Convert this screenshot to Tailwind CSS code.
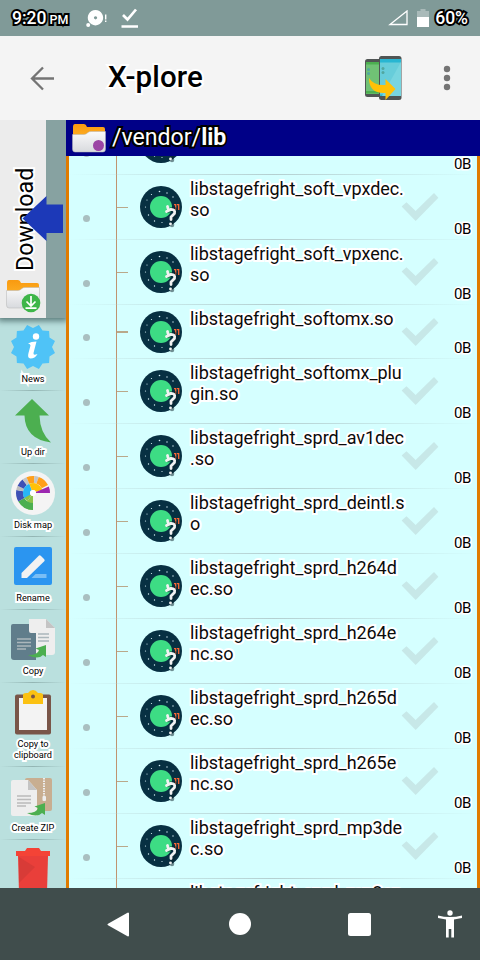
<!DOCTYPE html>
<html lang="en">
<head>
<meta charset="utf-8">
<title>X-plore</title>
<script src="https://cdn.jsdelivr.net/npm/@tailwindcss/browser@4"></script>
</head>
<body class="w-[480px] h-[960px] overflow-hidden flex flex-col bg-[#404d4c] font-[Roboto,sans-serif] text-black">

<svg class="absolute w-0 h-0">
  <defs>
    <linearGradient id="fo" x1="0" y1="0" x2="0" y2="1"><stop offset="0" stop-color="#f99a10"/><stop offset="1" stop-color="#ffb92e"/></linearGradient>
    <linearGradient id="fw" x1="0" y1="0" x2="0" y2="1"><stop offset="0" stop-color="#fafafa"/><stop offset="1" stop-color="#d8dade"/></linearGradient>
  </defs>
  <symbol id="folder" viewBox="0 0 34 30">
    <path d="M1 4Q1 1 3 1H12Q14 1 15 4H31Q33 4 33 6V22H1Z" fill="url(#fo)"/>
    <path d="M.5 11.500H12Q14 11.500 16 9.500Q17 8.500 19 8.500H33.500V26Q33.500 29 31 29H3Q.5 29 .5 26Z" fill="url(#fw)" stroke="#b5b5b5" stroke-width=".5"/>
  </symbol>
  <symbol id="android" viewBox="0 0 42 42">
    <circle cx="21" cy="21" r="21" fill="#073042"/>
    <g fill="#d7eff5"><circle cx="19.500" cy="5.500" r=".8"/><circle cx="27" cy="7" r=".7"/><circle cx="33" cy="11" r=".7"/><circle cx="11.500" cy="8.500" r=".6"/><circle cx="7" cy="14" r=".6"/><circle cx="5.500" cy="21" r=".6"/><circle cx="8.500" cy="29" r=".7"/><circle cx="14.500" cy="35" r=".7"/><circle cx="22" cy="36.500" r=".6"/></g>
    <circle cx="21" cy="21" r="11" fill="#3ddc84"/>
    <path d="M34 18.700H35.700V24M37 18.700H38.700V24" fill="none" stroke="#f86734" stroke-width="1.300"/>
    <g fill="none" stroke-linecap="round" stroke-linejoin="round"><path d="M27.500 24L30 22.500Q35 21 35.500 25Q35.500 28 32.500 30L31.500 33.500M31 37.500V38" stroke="#0a2028" stroke-opacity=".5" stroke-width="4.500" transform="translate(1 1)"/><path d="M27.500 20.500L28.500 24.500M26.500 25.500L31 23.300Q35.500 23.500 34.500 27.500L31 31V33.500M30.500 37.800V38" stroke="#f2f2f2" stroke-width="2.800"/></g>
  </symbol>
  <symbol id="check" viewBox="0 0 38 30"><path d="M0 14L5 9.500L14.500 18.500L33.500 0L38 5L14.500 29Z" fill="#c7e8e8"/></symbol>
</svg>

<header class="h-9 shrink-0 flex items-center bg-[#809a98] pl-3 text-white text-[17.5px] leading-none">
  <div class="w-[74px] pt-px font-medium [-webkit-text-stroke:4px_black] [paint-order:stroke_fill] whitespace-nowrap">9:20<span class="text-[12.5px]"> PM</span></div>
  <svg class="w-[22px] h-5" viewBox="0 0 22 20" fill="#fff"><path fill-rule="evenodd" d="M9.500 2A7.700 7.700 0 1 1 9.400 2ZM9.500 8.200A1.600 1.600 0 1 0 9.600 8.200Z"/><circle cx="2.200" cy="17" r="2"/><rect x="19" y="6.500" width="1.400" height="5"/><rect x="19" y="12.500" width="1.400" height="1.500"/></svg>
  <svg class="ml-3 w-5 h-5" viewBox="0 0 20 20" fill="none" stroke="#fff"><path d="M3 7L7.500 11.500L16 1.500M1.500 18.500H18" stroke-width="2.700"/></svg>
  <svg class="ml-auto w-5 h-4" viewBox="0 0 20 16"><path d="M2 14.500L19 1V14.500Z" fill="none" stroke="#fff" stroke-width="1.300"/></svg>
  <svg class="ml-[9px] w-3 h-[18px]" viewBox="0 0 12 18"><path d="M0 2H3.500V0H8.500V2H12V18H0Z" fill="#a9bab9"/><path d="M0 8H12V18H0Z" fill="#fff"/></svg>
  <div class="ml-[6px] mr-[12px] pt-px font-medium [-webkit-text-stroke:4px_black] [paint-order:stroke_fill]">60%</div>
</header>

<div class="h-[84px] shrink-0 flex items-center bg-[#f4f4f4] pl-[30px]">
  <svg class="w-[25px] h-[25px]" viewBox="0 0 25 25" fill="none" stroke="#747474" stroke-width="2.300"><path d="M24 12.500H2M13 1.500L2 12.500L13 23.500"/></svg>
  <h1 class="ml-[53px] text-[29.500px] leading-none tracking-[0.1px] font-medium [-webkit-text-stroke:4px_white] [paint-order:stroke_fill]">X-plore</h1>
  <svg class="ml-auto w-[38px] h-[46px]" viewBox="0 0 38 46">
    <rect x="1" y="4" width="20" height="38" rx="2.500" fill="#505554"/><path d="M2 7H16V39H2Z" fill="#70c275"/><path d="M2 7H16V9.500H2ZM2 36H16V38.500H2Z" fill="#4caf50"/>
    <rect x="15" y="1" width="22.500" height="44" rx="2.500" fill="#505554"/><path d="M16 4H37V41H16Z" fill="#67cdda"/><path d="M16 4H37V7.500H16ZM16 39.500H37V41H16Z" fill="#28b6d2"/>
    <path d="M37 7L18 41H37Z" fill="#78d5df"/><g fill="#51a7a0"><circle cx="4.500" cy="14.500" r="1.500"/><circle cx="4.500" cy="18.500" r="1.500"/><circle cx="19" cy="13.500" r="1.500"/><circle cx="19" cy="17.500" r="1.500"/></g>
    <path d="M5 23Q10 31 21.500 30V24L31.500 34L21.500 45V38Q5 39 5 23Z" fill="#ffc107"/>
  </svg>
  <svg class="ml-[41px] mr-[29px] w-[8px] h-[26px]" viewBox="0 0 8 26" fill="#747474"><circle cx="4" cy="4" r="3.200"/><circle cx="4" cy="13" r="3.200"/><circle cx="4" cy="22" r="3.200"/></svg>
</div>

<main class="h-[768px] shrink-0 flex overflow-hidden">
  <aside class="w-[66px] shrink-0 bg-[#bae0de] flex flex-col overflow-hidden relative">
    <div class="h-[198px] shrink-0 flex bg-[#87a2a1] z-10 shadow-[0_1px_6px_2px_rgba(50,80,80,0.7)]">
      <div class="w-[46px] bg-[#ececec] flex flex-col items-center justify-end pb-[5px]">
        <div class="h-[104px] mb-[8px] ml-[4px] text-[23.2px] leading-[28px] [writing-mode:vertical-rl] rotate-180 whitespace-nowrap [-webkit-text-stroke:4px_white] [paint-order:stroke_fill]">Download</div>
        <svg class="w-[36px] h-[34px]" viewBox="0 0 36 34"><use href="#folder" width="34" height="30" x="1" y="0"/><circle cx="26" cy="24" r="9.300" fill="#3eb649"/><path d="M26 17V26M21.500 22.500L26 27L30.500 22.500M20.500 29.200H31.500" fill="none" stroke="#fff" stroke-width="1.700"/></svg>
      </div>
    </div>
    <svg class="absolute z-20 left-[22px] top-[76px] w-[41px] h-[45px]" viewBox="0 0 41 45"><path d="M.5 22.500L24.500 0V8.500H41V37H24.500V45Z" fill="#1c39b8"/></svg>
    <div id="tools" class="flex flex-col"></div>
  </aside>

  <section class="flex-1 flex flex-col min-w-0">
    <div class="h-9 shrink-0 bg-[#000087] flex items-center pl-[6px] text-white text-[23.1px] leading-none">
      <svg class="w-[34px] h-[30px]" viewBox="0 0 34 30"><use href="#folder" width="34" height="30"/><circle cx="26.500" cy="22.500" r="5.500" fill="#9c45a5"/></svg>
      <div class="ml-[6px] whitespace-nowrap [-webkit-text-stroke:4px_black] [paint-order:stroke_fill]">/vendor/<b>lib</b></div>
    </div>
    <div class="flex-1 min-h-0 border-l-[3px] border-r-[3px] border-[#e07b00] bg-[#d5ffff] overflow-hidden flex flex-col">
      <div id="files" class="-mt-[46px] flex flex-col"></div>
    </div>
  </section>
</main>

<nav class="h-[72px] shrink-0 relative flex items-center bg-[#404d4c] pl-[107px]">
  <svg class="w-[22px] h-[25px]" viewBox="0 0 22 25"><path d="M1.500 12.500L21 1.500V23.500Z" fill="#fff" stroke="#fff" stroke-width="2" stroke-linejoin="round"/></svg>
  <div class="ml-[100px] w-[22px] h-[22px] rounded-full bg-white"></div>
  <div class="ml-[97px] w-[23px] h-[23px] rounded-[2.500px] bg-white"></div>
  <svg class="ml-[67px] w-6 h-[28px]" viewBox="0 0 24 28" fill="#fff"><circle cx="12" cy="3" r="2.700"/><path d="M0 5.500Q12 8.500 24 5.500V8L16 9.500V27.500H13.300V19H10.700V27.500H8V9.500L0 8Z"/></svg>
</nav>

<script>
const files = [
  ["", ""], ["libstagefright_soft_vpxdec.", "so"], ["libstagefright_soft_vpxenc.", "so"],
  ["libstagefright_softomx.so"], ["libstagefright_softomx_plu", "gin.so"], ["libstagefright_sprd_av1dec", ".so"],
  ["libstagefright_sprd_deintl.s", "o"], ["libstagefright_sprd_h264d", "ec.so"], ["libstagefright_sprd_h264e", "nc.so"],
  ["libstagefright_sprd_h265d", "ec.so"], ["libstagefright_sprd_h265e", "nc.so"], ["libstagefright_sprd_mp3de", "c.so"],
  ["libstagefright_sprd_mp3en", ""]
];
document.getElementById("files").innerHTML = files.map((f, i) => `
  <div class="${f.length > 1 ? "h-[65px]" : "h-[54px]"} shrink-0 relative flex items-center">
    <div class="w-[47px] h-full flex items-end justify-center pb-[18px] pr-[13px]"><i class="block w-[7px] h-[7px] rounded-full bg-[#a9bfc0]"></i></div>
    <div class="w-[12px] h-full border-l border-[#c09470] flex items-center"><i class="block w-full h-[1.500px] bg-[#b9a88a]"></i></div>
    <svg class="ml-[12px] ${f.length > 1 ? "mb-px" : ""} w-[42px] h-[42px] shrink-0"><use href="#android"/></svg>
    <div class="ml-[8px] w-[211px] h-full pt-[3px] shrink-0 text-[18px] leading-[21px] tracking-[-0.06px] whitespace-nowrap text-[#0b0b0b] [-webkit-text-stroke:4px_white] [paint-order:stroke_fill]">${f.map(s => `<div>${s}</div>`).join("")}</div>
    <svg class="w-[38px] h-[29px] shrink-0"><use href="#check"/></svg>
    <div class="h-full flex-1 flex items-end justify-end pb-[3px] pr-[6px] text-[15px] leading-[16px] tracking-tight [-webkit-text-stroke:3px_white] [paint-order:stroke_fill]">${i < files.length - 1 ? "0B" : ""}</div>
    <div class="absolute inset-x-0 bottom-0 h-px bg-linear-to-r from-transparent via-[#b4cfd0] to-transparent"></div>
  </div>`).join("");

const star = Array.from({length: 24}, (_, i) => {
  const r = i % 2 ? 19 : 22.8, a = (i * 15 - 75) * Math.PI / 180;
  return (24 + r * Math.cos(a)).toFixed(1) + "," + (24 + r * Math.sin(a)).toFixed(1);
}).join(" ");
const wedge = (a, b, r0, r1, c) => {
  const p = (r, t) => (24 + r * Math.cos(t * Math.PI / 180)).toFixed(1) + " " + (24 + r * Math.sin(t * Math.PI / 180)).toFixed(1);
  return `<path fill="${c}" d="M${p(r0, a)}L${p(r1, a)}A${r1} ${r1} 0 0 1 ${p(r1, b)}L${p(r0, b)}A${r0} ${r0} 0 0 0 ${p(r0, a)}Z"/>`;
};
const arrow = '<path d="M17 37Q27 37 28 32L24.500 30.500L35 27V39L32 37Q27 42 17 37Z" fill="#4caf50"/>';
const tools = [
  [["News"], `<polygon points="${star}" fill="#4fc3f7"/><circle cx="27" cy="13.500" r="3.200" fill="#fff"/><path d="M19 20.500Q22 18.500 27.500 18.500L24.500 30Q24 33 28.500 31Q26 35.500 21.500 35.500Q18 35 19.500 30L21.500 22.500Q21.500 21 19 20.500Z" fill="#fff"/>`],
  [["Up dir"], '<path d="M23 3L40 19.500H30.500Q31 37 42 46.500Q16 43 15.500 19.500H6Z" fill="#4caf50"/>'],
  [["Disk map"], '<circle cx="24" cy="24" r="22" fill="#f4f4f4"/>' + wedge(90,124,3,17,"#8bc34a") + wedge(90,150,10,17,"#4caf50") + wedge(124,170,3,10,"#8bc34a") + wedge(150,190,10,17,"#3f51b5") + wedge(190,205,10,17,"#bdbdbd") + wedge(205,232,10,17,"#3f51b5") + wedge(232,248,10,17,"#c4c4c4") + wedge(248,275,10,17,"#ff9f1a") + wedge(275,290,10,17,"#c4c4c4") + wedge(290,332,10,17,"#ff9f1a") + wedge(150,248,3,10,"#29b6f6") + wedge(248,340,3,10,"#ffc107") + wedge(338,360,3,17,"#9c27b0") + '<circle cx="24" cy="24" r="3" fill="#fff"/>'],
  [["Rename"], '<rect x="5" y="5" width="38" height="38" rx="2" fill="#2b95f0"/><path d="M12.500 31L30 13.500Q31 13 32 14L35 17Q36 18 35.500 19L18 36H12.500Z" fill="#f2f2f2"/><path d="M26.500 32H37.500V36H22.500Z" fill="#7abef5"/>'],
  [["Copy"], '<path d="M21 4H37L46 13V37Q46 40 43 40H20V4Z" fill="#eee"/><path d="M4 9H20V16Q20 18 22 18H27V45H5Q2 45 2 42V11Q2 9 4 9Z" fill="#607d8b"/><path d="M37 4V13H46Z" fill="#c4c4c4"/><path d="M8 24H22M8 27.500H22M8 31H22M8 34H17M29 19H40M29 22.500H40M29 26H40" stroke="#abb7bc" stroke-width="1.400"/>' + arrow.replace("<path", '<path transform="translate(2 3)"')],
  [["Copy to", "clipboard"], '<rect x="6" y="6.500" width="36" height="40" rx="2" fill="#795548"/><path d="M10 10H38V42H10Z" fill="#f3f3f3"/><path d="M14 7Q14 5 17 5H19Q21 2 24 2T29 5H31Q34 5 34 7V16H14Z" fill="#fbc112"/><circle cx="24" cy="8.500" r="2" fill="#795548"/>'],
  [["Create ZIP"], '<rect x="16" y="6" width="27" height="33" rx="2" fill="#c8ae91"/><path d="M35 6V26" stroke="#eee" stroke-width="2" stroke-dasharray="1.500 1"/><rect x="33.500" y="24" width="3.500" height="5" rx="1" fill="#eee"/><path d="M4 8H19L28 18V44H4Q2 44 2 42V10Q2 8 4 8Z" fill="#eee"/><path d="M19 8V18H28Z" fill="#c4c4c4"/><path d="M8 24H22M8 27.500H22M8 31H22M8 34H17" stroke="#bbb" stroke-width="1.400"/>' + arrow.replace("<path", '<path transform="translate(1 4)"')],
  [[""], '<path d="M9 11H39L38 48H10Z" fill="#e93f3a"/><path d="M7 6H16L18 3H30L32 6H41V11H7Z" fill="#f44336"/><path d="M10 12L26 22L10 38Z" fill="#d83b37"/>']
];
document.getElementById("tools").innerHTML = tools.map(([label, icon]) => `
  <div class="${label.length > 1 ? "h-[84px]" : "h-[73px]"} shrink-0 relative flex flex-col items-center pt-[5px]">
    <svg class="w-12 h-12 shrink-0" viewBox="0 0 48 48">${icon}</svg>
    <div class="mt-[2px] text-[9.200px] leading-[11px] text-center whitespace-nowrap [-webkit-text-stroke:4px_white] [paint-order:stroke_fill]">${label.map(s => `<div>${s}</div>`).join("")}</div>
    <div class="absolute inset-x-0 bottom-0 h-px bg-linear-to-r from-transparent via-[#93b5b3] to-transparent"></div>
  </div>`).join("");
</script>
</body>
</html>
